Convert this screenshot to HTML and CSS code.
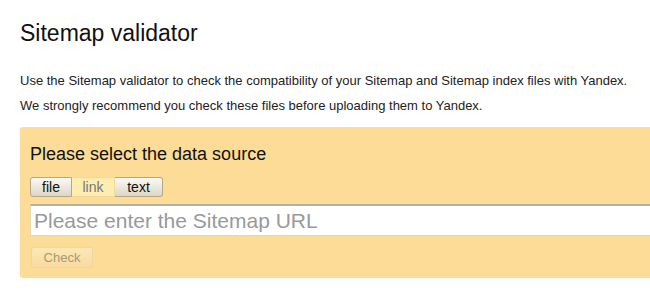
FILE: index.html
```html
<!DOCTYPE html>
<html lang="en">
<head>
    <meta charset="UTF-8">
    <title>Sitemap validator</title>
    <link rel="stylesheet" href="styles.css">
</head>
<body>
    <div class="page">
        <h1>Sitemap validator</h1>
        <p class="intro">Use the Sitemap validator to check the compatibility of your Sitemap and Sitemap index files with Yandex.</p>
        <p class="intro">We strongly recommend you check these files before uploading them to Yandex.</p>

        <!-- source form -->
        <div class="source-box">
            <h2>Please select the data source</h2>
            <div class="tabs">
                <button class="tab tab-file">file</button>
                <button class="tab tab-link active">link</button>
                <button class="tab tab-text">text</button>
            </div>
            <input class="url-input" type="text" placeholder="Please enter the Sitemap URL">
            <button class="check-btn" disabled>Check</button>
        </div>
    </div>
</body>
</html>
```

FILE: styles.css
```css
* {
    margin: 0;
    padding: 0;
    box-sizing: border-box;
}

body {
    font-family: Arial, "Liberation Sans", sans-serif;
    background-color: #fff;
    color: #000;
}

.page {
    padding: 20px 0 0 20px;
    overflow: hidden;
}

h1 {
    font-size: 23px;
    font-weight: normal;
    line-height: 26px;
    color: #111;
    margin-bottom: 27px;
}

.intro {
    font-size: 13px;
    line-height: 16px;
    color: #222;
    margin-bottom: 9px;
}

.source-box {
    margin-top: 13px;
    margin-right: -30px;
    background-color: #fcdc96;
    border-radius: 3px;
    padding: 17px 0 10px 10px;
}

.source-box h2 {
    font-size: 18px;
    font-weight: normal;
    line-height: 20px;
    color: #111;
    margin-bottom: 13px;
}

.tabs {
    display: flex;
    margin-bottom: 7px;
}

.tab {
    font-family: inherit;
    font-size: 14px;
    height: 20px;
    border: 1px solid #b8a68a;
    border-left: none;
    background: linear-gradient(#fbfaf6, #ddd6c4);
    color: #111;
}

.tab-file {
    width: 42px;
    border-left: 1px solid #b8a68a;
    border-radius: 3px 0 0 3px;
}

.tab-link {
    width: 43px;
}

.tab-text {
    width: 48px;
    border-radius: 0 3px 3px 0;
}

.tab.active {
    background: #fdedb0;
    border-color: #f2d999;
    color: #777;
}

.url-input {
    display: block;
    width: 100%;
    height: 32px;
    border: 1px solid #e6d8b6;
    border-top: 2px solid #b5b0a5;
    border-right: none;
    background-color: #fff;
    font-family: inherit;
    font-size: 21px;
    padding: 0 3px;
    margin-bottom: 11px;
}

.url-input::placeholder {
    color: #999;
}

.check-btn {
    display: block;
    width: 62px;
    height: 21px;
    margin-left: 1px;
    font-family: inherit;
    font-size: 13px;
    border: 1px solid #efd7a0;
    border-radius: 3px;
    background: linear-gradient(#fde8b4, #f8dba0);
    color: #a99978;
}
```
